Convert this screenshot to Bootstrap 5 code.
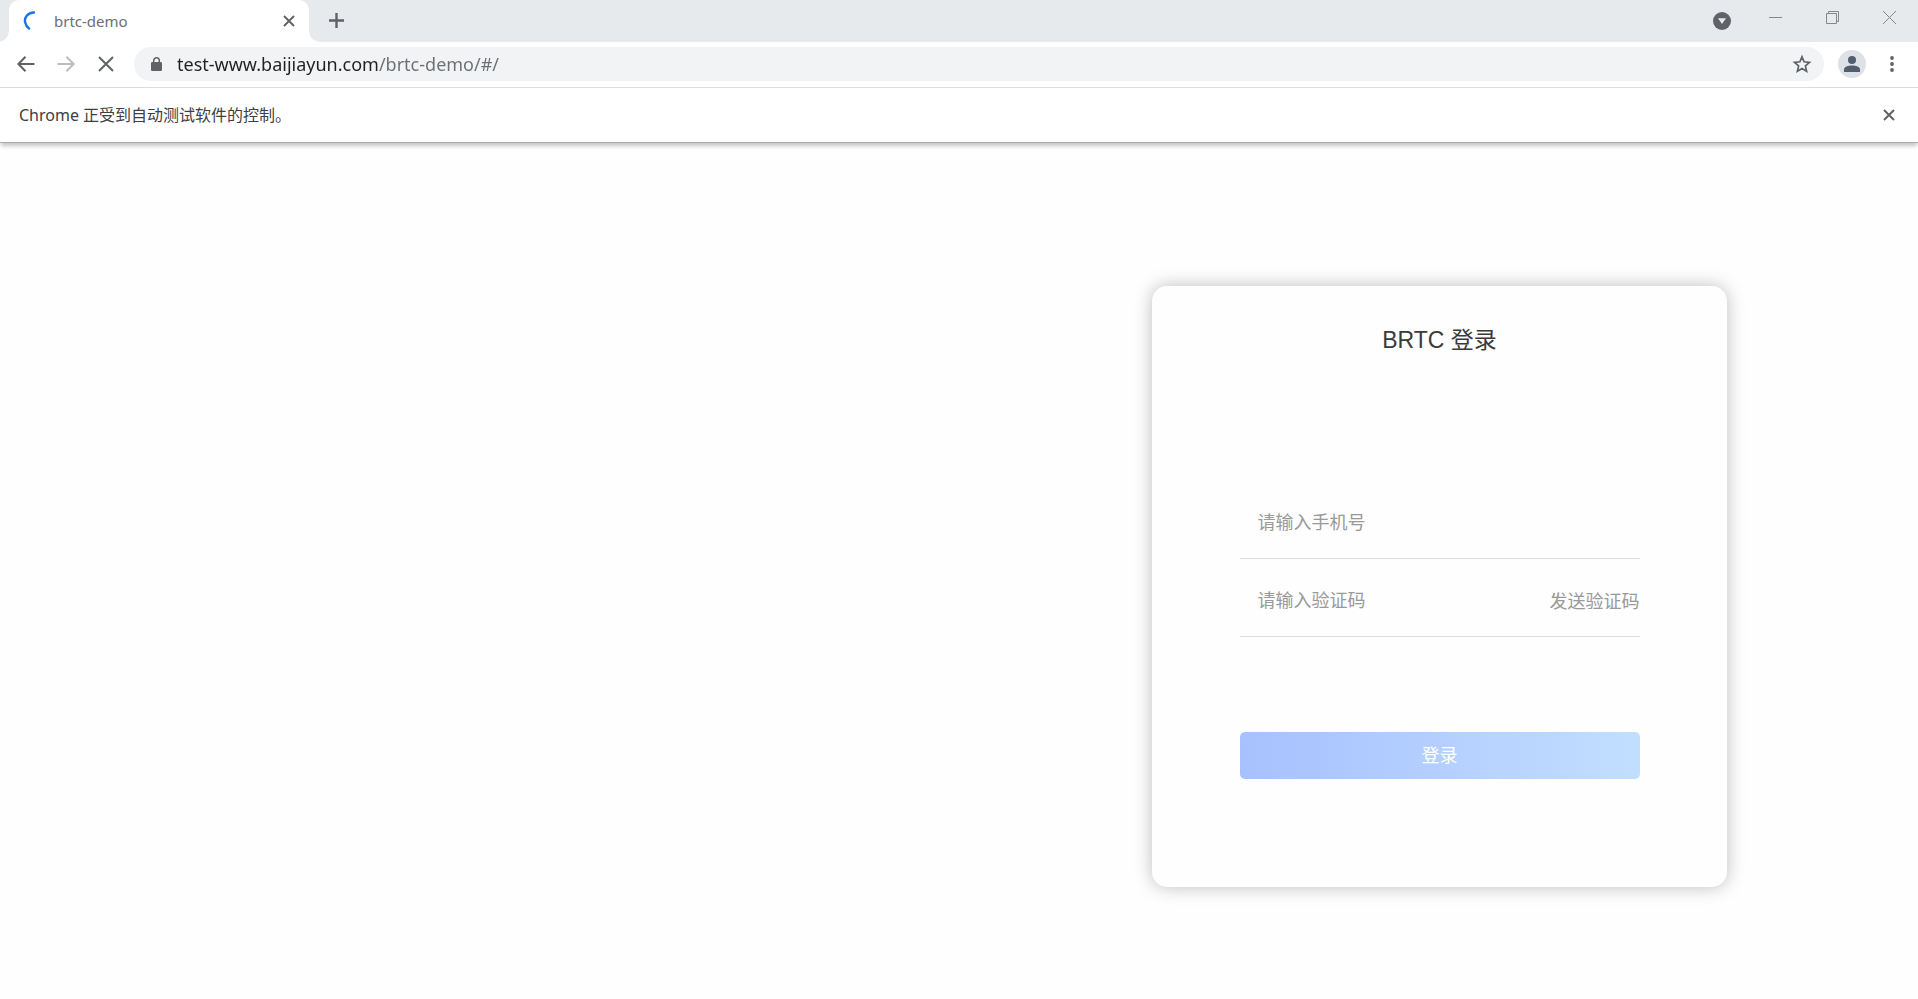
<!DOCTYPE html>
<html lang="zh-CN">
<head>
<meta charset="utf-8">
<meta name="viewport" content="width=device-width, initial-scale=1">
<title>brtc-demo</title>
<link href="https://cdn.jsdelivr.net/npm/bootstrap@5.3.0/dist/css/bootstrap.min.css" rel="stylesheet">
<style>
  body { font-family: "Noto Sans", "Noto Sans CJK SC", sans-serif; background: #fefefe; color: #3c4043; }
  svg { display: block; flex: none; }
  .icon-btn { background: none; border: 0; padding: 0; flex: none; display: flex; align-items: center; justify-content: center; color: #5f6368; }

  /* tab strip */
  .tab-strip { height: 42px; background: #e6eaed; padding-left: 9px; }
  .page-tab { position: relative; width: 300px; height: 42px; padding: 0 14px 1px; background: #fff; border-radius: 10px 10px 0 0; }
  .page-tab::before, .page-tab::after { content: ""; position: absolute; bottom: 0; width: 10px; height: 10px; }
  .page-tab::before { right: 100%; background: radial-gradient(circle at 0 0, transparent 9px, #fff 10px); }
  .page-tab::after { left: 100%; background: radial-gradient(circle at 100% 0, transparent 9px, #fff 10px); }
  .tab-title { font-size: 15px; line-height: 20px; color: #6b6f74; padding-left: 13px; }
  .strip-btn { height: 41px; }
  .win-btn { width: 57px; height: 35px; color: #85888a; }

  /* toolbar */
  .tool-bar { height: 45px; background: #fff; padding: 0 12px 1px; }
  .nav-group { gap: 12px; margin-right: 14px; }
  .user-group { gap: 12px; margin-left: 14px; }
  .nav-btn { width: 28px; height: 28px; }
  .address-box { height: 34px; border-radius: 17px; background: #f1f3f4; padding: 0 12px 0 17px; }
  .address-input { border: 0; outline: 0; padding: 0; margin-left: 15px; height: 30px; font-size: 18px; color: #202124;
    background: linear-gradient(90deg, #202124 201px, #6b6f74 201px); -webkit-background-clip: text; background-clip: text; -webkit-text-fill-color: transparent; }
  .avatar { width: 28px; height: 28px; border-radius: 50%; background: #dee1e6; color: #525d70; }

  /* automation notice */
  .info-bar { height: 56px; background: #fff; border-top: 1px solid #dadce0; border-bottom: 1px solid #a9abad; padding: 0 23px 0 19px; font-size: 16px; line-height: 24px; box-shadow: 0 4px 4px -1px rgba(0,0,0,.22); }

  /* login */
  .login-area { padding: 143px 0 40px 4px; }
  .login-card { width: 60%; padding: 38px 24px 108px; background: #fefefe; border-radius: 15px; box-shadow: 0 0 18px rgba(0,0,0,.26); font-family: "Liberation Sans", "Noto Sans CJK SC", sans-serif; }
  .login-title { font-size: 23px; line-height: 32px; color: #3a3a3a; }
  .login-form { max-width: 400px; margin-top: 125px; }
  .form-line { height: 78px; border-bottom: 1px solid #dcdfe0; padding: 8px 0 0 18px; }
  .line-input { border: 0; outline: 0; padding: 0; background: none; font-size: 18px; line-height: 24px; height: 30px; color: #333; }
  .line-input::placeholder { color: #999; opacity: 1; }
  .send-code { border: 0; padding: 0; background: none; font-size: 18px; line-height: 24px; color: #999; }
  .login-btn { height: 47px; margin-top: 95px; padding: 0; border: 0; border-radius: 5px; font-size: 18px; line-height: 24px; color: #fff; background: linear-gradient(90deg, #a6c1ff, #c2deff); }
</style>
</head>
<body>
<header>
  <div class="tab-strip d-flex">
    <div class="page-tab d-flex align-items-center">
      <svg width="18" height="20" viewBox="0 0 18 20" fill="none" stroke="#1a73e8" stroke-width="2.4" stroke-linecap="round"><path d="M11 1.500C4.500 1.800 1 6.500 2.200 11.500C2.800 14 4 16 6 17.500"/></svg>
      <span class="tab-title flex-grow-1">brtc-demo</span>
      <button class="icon-btn" type="button" aria-label="关闭标签页"><svg width="12" height="12" viewBox="0 0 12 12" stroke="currentColor" stroke-width="1.900"><path d="M1 1l10 10M11 1L1 11"/></svg></button>
    </div>
    <button class="icon-btn strip-btn ms-3 ps-1" type="button" aria-label="新标签页"><svg width="15" height="15" viewBox="0 0 15 15" stroke="currentColor" stroke-width="2.400"><path d="M7.500 0v15M0 7.500h15"/></svg></button>
    <div class="d-flex ms-auto">
      <button class="icon-btn strip-btn me-3" type="button" aria-label="搜索标签页"><svg width="18" height="18" viewBox="0 0 18 18"><circle cx="9" cy="9" r="9" fill="#5f6368"/><path d="M5 6.200h8L9 12z" fill="#e6eaed"/></svg></button>
      <button class="icon-btn win-btn" type="button" aria-label="最小化"><svg width="13" height="13" viewBox="0 0 13 13" stroke="currentColor"><path d="M0 6.500h13"/></svg></button>
      <button class="icon-btn win-btn" type="button" aria-label="还原"><svg width="13" height="13" viewBox="0 0 13 13" fill="none" stroke="currentColor"><path d="M.5 2.500h10v10H.5zM2.500 2.500v-2h10v10h-2"/></svg></button>
      <button class="icon-btn win-btn" type="button" aria-label="关闭"><svg width="13" height="13" viewBox="0 0 13 13" stroke="currentColor"><path d="M0 0l13 13M13 0L0 13"/></svg></button>
    </div>
  </div>

  <div class="tool-bar d-flex align-items-center">
    <div class="nav-group d-flex">
      <button class="icon-btn nav-btn" type="button" aria-label="后退"><svg width="18" height="16" viewBox="0 0 18 16" fill="none" stroke="currentColor" stroke-width="2"><path d="M17.500 8H2M8.500 .8L1.400 8l7.100 7.200"/></svg></button>
      <button class="icon-btn nav-btn" type="button" aria-label="前进" disabled><svg width="18" height="16" viewBox="0 0 18 16" fill="none" stroke="#babcbe" stroke-width="2"><path d="M.5 8H16M9.500 .8l7.100 7.200-7.100 7.200"/></svg></button>
      <button class="icon-btn nav-btn" type="button" aria-label="停止加载"><svg width="16" height="16" viewBox="0 0 16 16" stroke="currentColor" stroke-width="2"><path d="M1 1l14 14M15 1L1 15"/></svg></button>
    </div>
    <div class="address-box d-flex align-items-center flex-grow-1">
      <svg width="11" height="14" viewBox="0 0 11 14"><rect y="5" width="11" height="9" rx="1.300" fill="#5f6368"/><path d="M2.700 6V3.600a2.800 2.800 0 0 1 5.600 0V6" fill="none" stroke="#5f6368" stroke-width="1.500"/></svg>
      <input class="address-input flex-grow-1" type="text" aria-label="地址" value="test-www.baijiayun.com/brtc-demo/#/">
      <button class="icon-btn" type="button" aria-label="添加书签"><svg width="20" height="20" viewBox="0 0 20 20" fill="none" stroke="#5f6368" stroke-width="1.700"><path d="M10 2.800l2.100 5 5.400.5-4.100 3.600 1.200 5.300L10 14.400l-4.600 2.800 1.200-5.300-4.100-3.600 5.400-.5z"/></svg></button>
    </div>
    <div class="user-group d-flex">
      <button class="icon-btn avatar" type="button" aria-label="用户"><svg width="16" height="16" viewBox="0 0 16 16" fill="currentColor"><circle cx="8" cy="4" r="4"/><path d="M0 16v-2.500C0 10.800 4 9.500 8 9.500s8 1.300 8 4V16z"/></svg></button>
      <button class="icon-btn nav-btn" type="button" aria-label="菜单"><svg width="4" height="16" viewBox="0 0 4 16" fill="currentColor"><circle cx="2" cy="2" r="1.900"/><circle cx="2" cy="8" r="1.900"/><circle cx="2" cy="14" r="1.900"/></svg></button>
    </div>
  </div>

  <div class="info-bar d-flex align-items-center justify-content-between">
    <span>Chrome 正受到自动测试软件的控制。</span>
    <button class="icon-btn" type="button" aria-label="关闭提示"><svg width="12" height="12" viewBox="0 0 12 12" stroke="currentColor" stroke-width="2"><path d="M1 1l10 10M11 1L1 11"/></svg></button>
  </div>
</header>

<main class="login-area">
  <div class="row g-0">
    <div class="col-6 offset-6 d-flex justify-content-center">
      <section class="login-card">
        <h1 class="login-title text-center fw-normal m-0">BRTC 登录</h1>
        <form class="login-form mx-auto">
          <div class="form-line d-flex align-items-center">
            <input class="line-input w-100" type="tel" placeholder="请输入手机号" aria-label="手机号">
          </div>
          <div class="form-line d-flex align-items-center">
            <input class="line-input flex-grow-1" type="text" placeholder="请输入验证码" aria-label="验证码">
            <button class="send-code" type="button">发送验证码</button>
          </div>
          <button class="login-btn btn w-100" type="submit">登录</button>
        </form>
      </section>
    </div>
  </div>
</main>
<script src="https://cdn.jsdelivr.net/npm/bootstrap@5.3.0/dist/js/bootstrap.bundle.min.js"></script>
</body>
</html>
